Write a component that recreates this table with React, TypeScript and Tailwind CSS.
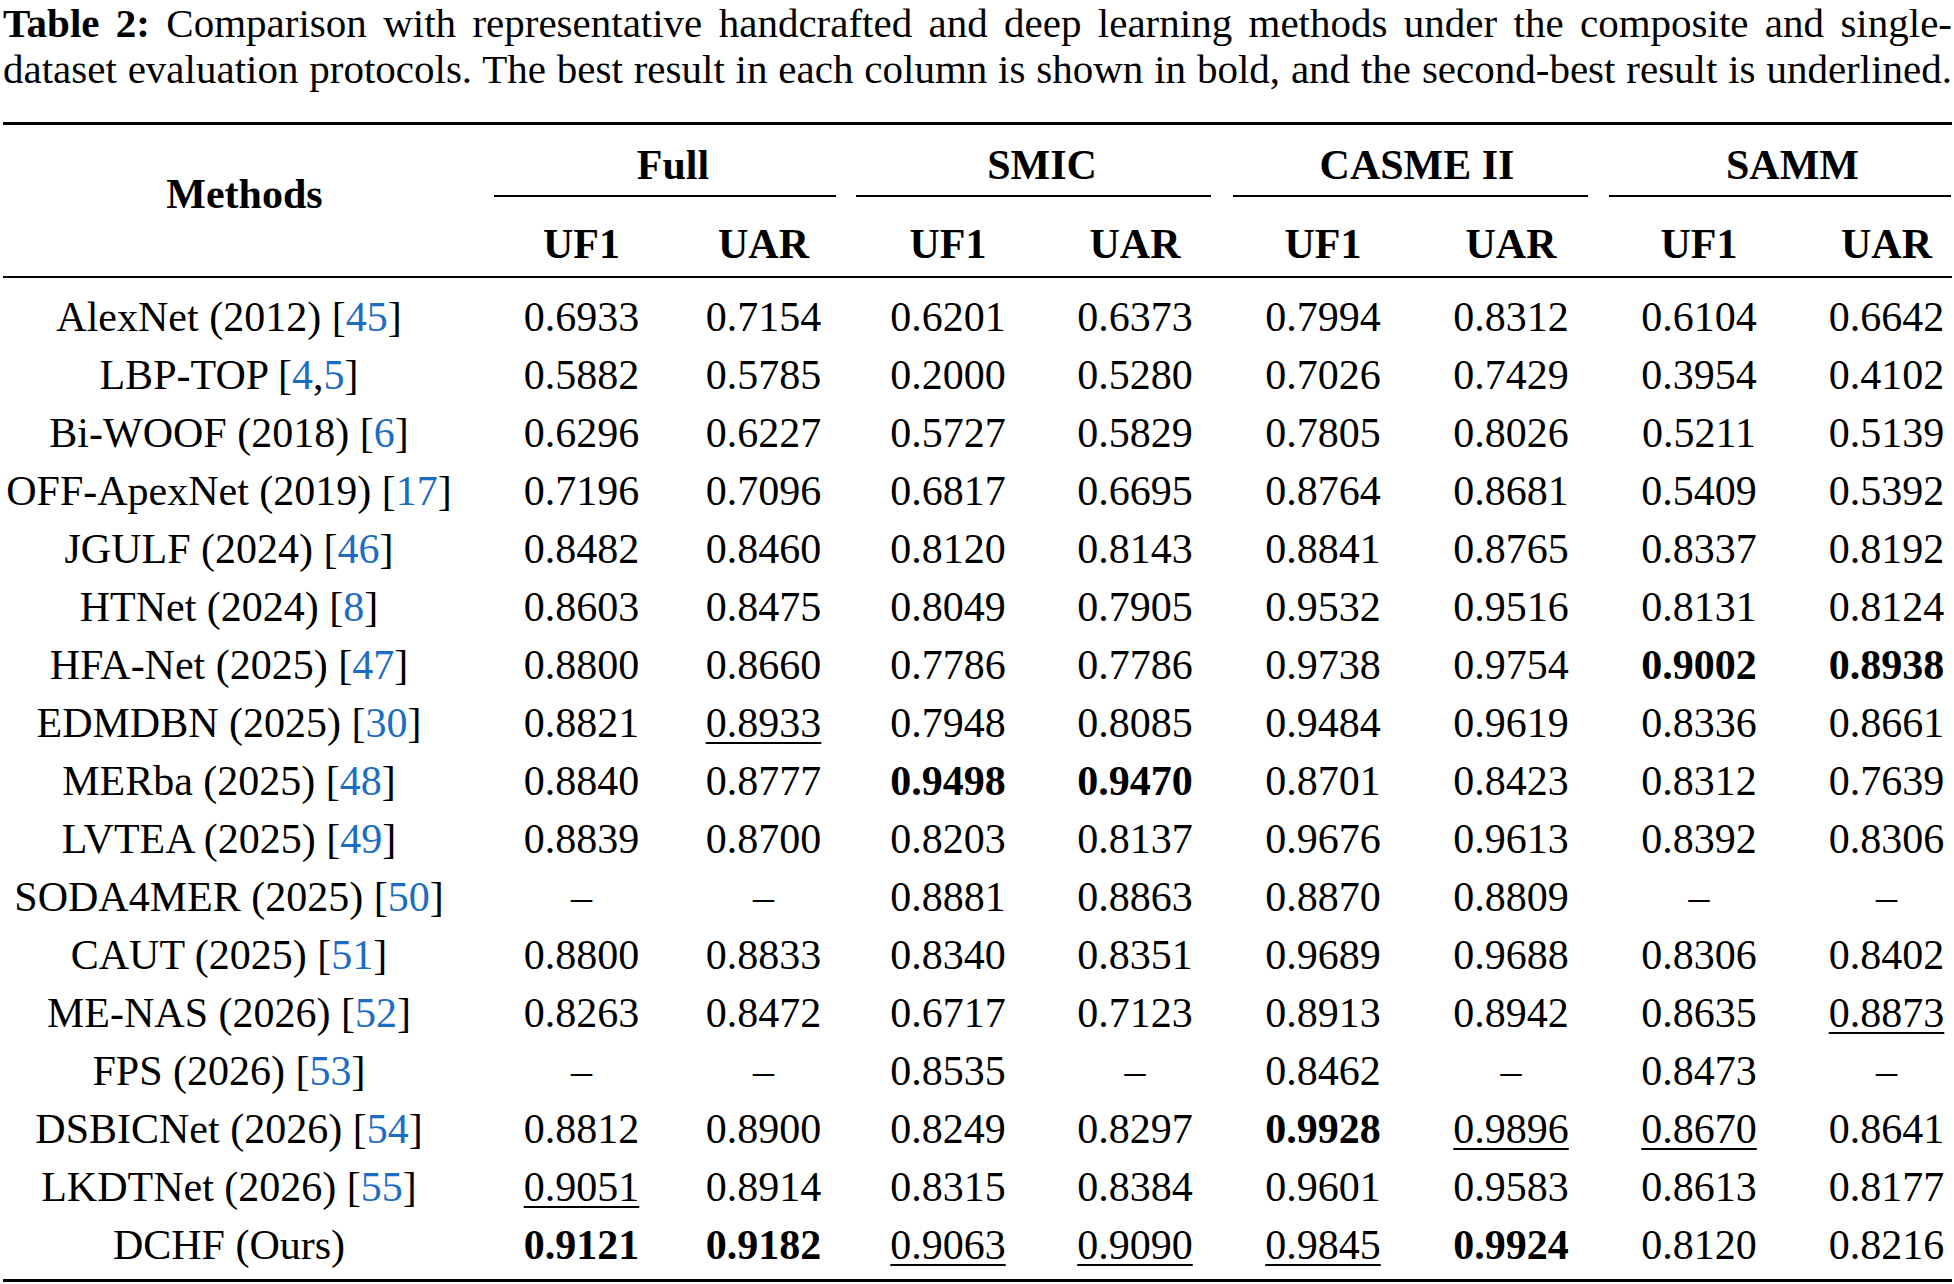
import React from 'react';

type Row = { name: string; refs?: string[]; vals: string[] };

// "*" prefix = best (bold), "_" prefix = second best (underlined)
const rows: Row[] = [
  { name: 'AlexNet (2012)', refs: ['45'], vals: ['0.6933', '0.7154', '0.6201', '0.6373', '0.7994', '0.8312', '0.6104', '0.6642'] },
  { name: 'LBP-TOP', refs: ['4', '5'], vals: ['0.5882', '0.5785', '0.2000', '0.5280', '0.7026', '0.7429', '0.3954', '0.4102'] },
  { name: 'Bi-WOOF (2018)', refs: ['6'], vals: ['0.6296', '0.6227', '0.5727', '0.5829', '0.7805', '0.8026', '0.5211', '0.5139'] },
  { name: 'OFF-ApexNet (2019)', refs: ['17'], vals: ['0.7196', '0.7096', '0.6817', '0.6695', '0.8764', '0.8681', '0.5409', '0.5392'] },
  { name: 'JGULF (2024)', refs: ['46'], vals: ['0.8482', '0.8460', '0.8120', '0.8143', '0.8841', '0.8765', '0.8337', '0.8192'] },
  { name: 'HTNet (2024)', refs: ['8'], vals: ['0.8603', '0.8475', '0.8049', '0.7905', '0.9532', '0.9516', '0.8131', '0.8124'] },
  { name: 'HFA-Net (2025)', refs: ['47'], vals: ['0.8800', '0.8660', '0.7786', '0.7786', '0.9738', '0.9754', '*0.9002', '*0.8938'] },
  { name: 'EDMDBN (2025)', refs: ['30'], vals: ['0.8821', '_0.8933', '0.7948', '0.8085', '0.9484', '0.9619', '0.8336', '0.8661'] },
  { name: 'MERba (2025)', refs: ['48'], vals: ['0.8840', '0.8777', '*0.9498', '*0.9470', '0.8701', '0.8423', '0.8312', '0.7639'] },
  { name: 'LVTEA (2025)', refs: ['49'], vals: ['0.8839', '0.8700', '0.8203', '0.8137', '0.9676', '0.9613', '0.8392', '0.8306'] },
  { name: 'SODA4MER (2025)', refs: ['50'], vals: ['–', '–', '0.8881', '0.8863', '0.8870', '0.8809', '–', '–'] },
  { name: 'CAUT (2025)', refs: ['51'], vals: ['0.8800', '0.8833', '0.8340', '0.8351', '0.9689', '0.9688', '0.8306', '0.8402'] },
  { name: 'ME-NAS (2026)', refs: ['52'], vals: ['0.8263', '0.8472', '0.6717', '0.7123', '0.8913', '0.8942', '0.8635', '_0.8873'] },
  { name: 'FPS (2026)', refs: ['53'], vals: ['–', '–', '0.8535', '–', '0.8462', '–', '0.8473', '–'] },
  { name: 'DSBICNet (2026)', refs: ['54'], vals: ['0.8812', '0.8900', '0.8249', '0.8297', '*0.9928', '_0.9896', '_0.8670', '0.8641'] },
  { name: 'LKDTNet (2026)', refs: ['55'], vals: ['_0.9051', '0.8914', '0.8315', '0.8384', '0.9601', '0.9583', '0.8613', '0.8177'] },
  { name: 'DCHF (Ours)', vals: ['*0.9121', '*0.9182', '_0.9063', '_0.9090', '_0.9845', '*0.9924', '0.8120', '0.8216'] },
];

const grid = 'grid grid-cols-[488px_181px_183px_186px_188px_188px_188px_188px_159px]';

const Value = ({ v, last }: { v: string; last: boolean }) => {
  const bold = v.startsWith('*');
  const under = v.startsWith('_');
  const text = bold || under ? v.slice(1) : v;
  return (
    <div className={`text-center ${last ? 'pl-[28px]' : ''}`}>
      <span
        className={
          bold ? 'font-bold' : under ? 'underline decoration-2 underline-offset-[5px]' : ''
        }>
        {text}
      </span>
    </div>
  );
};

const Method = ({ row }: { row: Row }) => (
  <div className="pr-[36px] text-center whitespace-nowrap">
    {row.name}
    {row.refs && (
      <>
        {' ['}
        {row.refs.map((r, i) => (
          <React.Fragment key={r}>
            {i > 0 && ','}
            <span className="text-[#1d6cc4]">{r}</span>
          </React.Fragment>
        ))}
        {']'}
      </>
    )}
  </div>
);

const App: React.FC = () => {
  const subHeads = ['UF1', 'UAR', 'UF1', 'UAR', 'UF1', 'UAR', 'UF1', 'UAR'];

  return (
    <div className="bg-white text-black font-['Liberation_Serif',serif] min-h-screen">
      <div className="ml-[3px] w-[1949px]">
        {/* caption */}
        <div className="pt-[4px] text-[41px] leading-[38px]">
          <p className="text-justify [text-align-last:justify]">
            <span className="font-bold">Table 2:</span> Comparison with representative handcrafted and deep
            learning methods under the composite and single-
          </p>
          <p className="mt-[8px] text-justify [text-align-last:justify]">
            dataset evaluation protocols. The best result in each column is shown in bold, and the
            second-best result is underlined.
          </p>
        </div>

        <div className="mt-[34px] h-[3px] bg-black" />

        <div className="text-[42px] leading-[58px]">
          {/* header */}
          <div className={`${grid} grid-rows-[59px_2px_79px] pt-[11px] font-bold`}>
            <div className="row-span-3 pt-[29px] pr-[5px] text-center">Methods</div>
            <div className="col-span-2 text-center">Full</div>
            <div className="col-span-2 text-center">SMIC</div>
            <div className="col-span-2 text-center">CASME II</div>
            <div className="col-span-2 pl-[28px] text-center">SAMM</div>
            <div className="col-span-8 flex">
              <div className="ml-[3px] w-[342px] h-[2px] bg-black" />
              <div className="ml-[20px] w-[355px] h-[2px] bg-black" />
              <div className="ml-[22px] w-[355px] h-[2px] bg-black" />
              <div className="ml-[21px] w-[342px] h-[2px] bg-black" />
            </div>
            {subHeads.map((h, i) => (
              <div key={i} className={`pt-[18px] text-center ${i === 7 ? 'pl-[28px]' : ''}`}>
                {h}
              </div>
            ))}
          </div>

          <div className="h-[2px] bg-black" />

          {/* body */}
          <div className="mt-[10px]">
            {rows.map((row) => (
              <div key={row.name} className={`${grid} h-[58px]`}>
                <Method row={row} />
                {row.vals.map((v, i) => (
                  <Value key={i} v={v} last={i === 7} />
                ))}
              </div>
            ))}
          </div>

          <div className="mt-[5px] h-[3px] bg-black" />
        </div>
      </div>
    </div>
  );
};

export default App;
